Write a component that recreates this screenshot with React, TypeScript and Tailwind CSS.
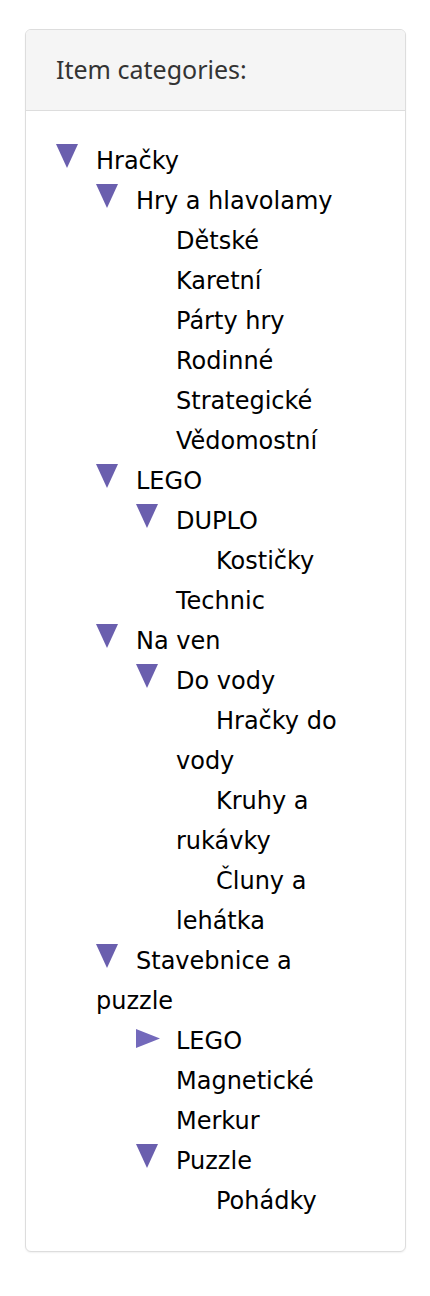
type Node = {
  name: string;
  open?: boolean;
  children?: Node[];
};

const tree: Node[] = [
  {
    name: "Hračky",
    open: true,
    children: [
      {
        name: "Hry a hlavolamy",
        open: true,
        children: [
          { name: "Dětské" },
          { name: "Karetní" },
          { name: "Párty hry" },
          { name: "Rodinné" },
          { name: "Strategické" },
          { name: "Vědomostní" },
        ],
      },
      {
        name: "LEGO",
        open: true,
        children: [
          { name: "DUPLO", open: true, children: [{ name: "Kostičky" }] },
          { name: "Technic" },
        ],
      },
      {
        name: "Na ven",
        open: true,
        children: [
          {
            name: "Do vody",
            open: true,
            children: [
              { name: "Hračky do vody" },
              { name: "Kruhy a rukávky" },
              { name: "Čluny a lehátka" },
            ],
          },
        ],
      },
      {
        name: "Stavebnice a puzzle",
        open: true,
        children: [
          { name: "LEGO", open: false, children: [{ name: "Classic" }] },
          { name: "Magnetické" },
          { name: "Merkur" },
          { name: "Puzzle", open: true, children: [{ name: "Pohádky" }] },
        ],
      },
    ],
  },
];

function Marker({ node }: { node: Node }) {
  if (!node.children) {
    return <span className="inline-block w-[40px]" />;
  }
  if (node.open) {
    return (
      <span className="inline-block w-[40px] h-[40px] align-top relative">
        <svg className="absolute left-0 top-[3px]" width="22" height="24" viewBox="0 0 22 24">
          <polygon points="0,0 22,0 11,24" fill="#6a5fae" />
        </svg>
      </span>
    );
  }
  return (
    <span className="inline-block w-[40px] h-[40px] align-top relative">
      <svg className="absolute left-0 top-[8px]" width="24" height="19" viewBox="0 0 24 19">
        <polygon points="0,0 24,9.5 0,19" fill="#7369bb" />
      </svg>
    </span>
  );
}

function TreeList({ nodes, root }: { nodes: Node[]; root?: boolean }) {
  return (
    <ul className={root ? "" : "pl-[40px]"}>
      {nodes.map((node, i) => (
        <li key={i}>
          <Marker node={node} />
          {node.name}
          {node.children && node.open && <TreeList nodes={node.children} />}
        </li>
      ))}
    </ul>
  );
}

export default function App() {
  return (
    <div className="min-h-screen bg-white pt-[29px] px-[25px]">
      <div className="w-[381px] rounded-[6px] border border-[#dddddd] bg-white shadow-[0_1px_2px_rgba(0,0,0,0.06)] overflow-hidden">
        <div className="h-[81px] border-b border-[#dddddd] bg-[#f5f5f5] px-[30px] flex items-center">
          <h2 className="font-['Noto_Sans',sans-serif] text-[25px] text-[#333333]">Item categories:</h2>
        </div>
        <div className="px-[30px] py-[30px] font-['DejaVu_Sans',Verdana,sans-serif] text-[24px] leading-[40px] text-black">
          <TreeList nodes={tree} root />
        </div>
      </div>
    </div>
  );
}
